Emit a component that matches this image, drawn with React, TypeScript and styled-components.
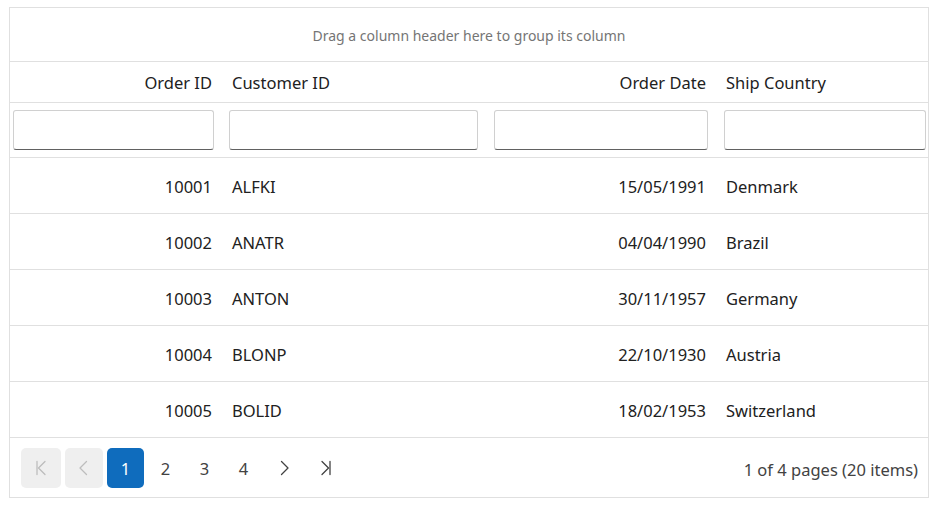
import React from "react";
import styled, { createGlobalStyle } from "styled-components";

const Global = createGlobalStyle`
  html, body { margin: 0; padding: 0; background: #fff; }
  body { font-family: "Noto Sans", "Open Sans", sans-serif; color: #212121; }
  * { box-sizing: border-box; }
`;

const Page = styled.div`
  padding: 7px 6px 0 9px;
  width: 934px;
`;

const Grid = styled.div`
  width: 920px;
  border: 1px solid #e0e0e0;
`;

const GroupPanel = styled.div`
  height: 54px;
  display: flex;
  align-items: center;
  justify-content: center;
  font-size: 14px;
  color: #757575;
  border-bottom: 1px solid #e0e0e0;
  padding-top: 1px;
`;

const Row = styled.div<{ $h: number; $pt?: number }>`
  display: grid;
  grid-template-columns: 212px 264px 230px 1fr;
  height: ${(p) => p.$h}px;
  padding-top: ${(p) => p.$pt ?? 0}px;
  border-bottom: 1px solid #e0e0e0;
  align-items: center;
  font-size: 16.5px;
`;

const Cell = styled.div<{ $right?: boolean }>`
  padding: 0 10px;
  text-align: ${(p) => (p.$right ? "right" : "left")};
  white-space: nowrap;
`;

const FilterCell = styled.div<{ $pl: number; $pr: number }>`
  padding: 0 ${(p) => p.$pr}px 0 ${(p) => p.$pl}px;
  display: flex;
`;

const FilterInput = styled.input`
  width: 100%;
  height: 40px;
  border: 1px solid #d0d0d0;
  border-bottom: 1px solid #616161;
  border-radius: 3px;
  outline: none;
  font: inherit;
  padding: 0 8px;
  background: #fff;
`;

const Pager = styled.div`
  height: 59px;
  display: flex;
  align-items: center;
  justify-content: space-between;
  padding: 0 10px 0 11px;
`;

const PagerButtons = styled.div`
  display: flex;
  gap: 4px;
  align-items: center;
`;

const PageBtn = styled.div<{ $variant?: "disabled" | "active" | "plain"; $w?: number }>`
  width: ${(p) => p.$w ?? 38}px;
  height: 40px;
  border-radius: 5px;
  display: flex;
  align-items: center;
  justify-content: center;
  font-size: 16.5px;
  padding-top: 2px;
  background: ${(p) =>
    p.$variant === "disabled" ? "#efefef" : p.$variant === "active" ? "#0f6cbd" : "transparent"};
  color: ${(p) =>
    p.$variant === "disabled" ? "#bdbdbd" : p.$variant === "active" ? "#fff" : "#424242"};
`;

const PagerInfo = styled.div`
  font-size: 16.5px;
  color: #424242;
  padding-top: 3px;
`;

const data = [
  ["10001", "ALFKI", "15/05/1991", "Denmark"],
  ["10002", "ANATR", "04/04/1990", "Brazil"],
  ["10003", "ANTON", "30/11/1957", "Germany"],
  ["10004", "BLONP", "22/10/1930", "Austria"],
  ["10005", "BOLID", "18/02/1953", "Switzerland"],
];

const Icon = ({ d }: { d: string }) => (
  <svg width="20" height="20" viewBox="0 0 20 20" fill="none" stroke="currentColor" strokeWidth="1.3" strokeLinecap="round" strokeLinejoin="round" style={{ marginTop: -2 }}>
    <path d={d} />
  </svg>
);

export default function App() {
  return (
    <>
      <Global />
      <Page>
        <Grid>
          <GroupPanel>Drag a column header here to group its column</GroupPanel>
          <Row $h={41}>
            <Cell $right>Order ID</Cell>
            <Cell>Customer ID</Cell>
            <Cell $right>Order Date</Cell>
            <Cell>Ship Country</Cell>
          </Row>
          <Row $h={55}>
            <FilterCell $pl={3} $pr={8}><FilterInput /></FilterCell>
            <FilterCell $pl={7} $pr={8}><FilterInput /></FilterCell>
            <FilterCell $pl={8} $pr={8}><FilterInput /></FilterCell>
            <FilterCell $pl={8} $pr={2}><FilterInput /></FilterCell>
          </Row>
          {data.map((r) => (
            <Row $h={56} $pt={2} key={r[0]}>
              <Cell $right>{r[0]}</Cell>
              <Cell>{r[1]}</Cell>
              <Cell $right>{r[2]}</Cell>
              <Cell>{r[3]}</Cell>
            </Row>
          ))}
          <Pager>
            <PagerButtons>
              <PageBtn $variant="disabled" $w={40}><Icon d="M6 3.5v13M14 3.5L7.5 10l6.5 6.5" /></PageBtn>
              <PageBtn $variant="disabled" $w={38}><Icon d="M12.5 3.5L6 10l6.5 6.5" /></PageBtn>
              <PageBtn $variant="active" $w={37}>1</PageBtn>
              <PageBtn $variant="plain" $w={35}>2</PageBtn>
              <PageBtn $variant="plain" $w={35}>3</PageBtn>
              <PageBtn $variant="plain" $w={35}>4</PageBtn>
              <PageBtn $variant="plain" $w={38}><Icon d="M7.5 3.5L14 10l-6.5 6.5" /></PageBtn>
              <PageBtn $variant="plain" $w={38}><Icon d="M6 3.5l6.5 6.5L6 16.5M14 3.5v13" /></PageBtn>
            </PagerButtons>
            <PagerInfo>1 of 4 pages (20 items)</PagerInfo>
          </Pager>
        </Grid>
      </Page>
    </>
  );
}
